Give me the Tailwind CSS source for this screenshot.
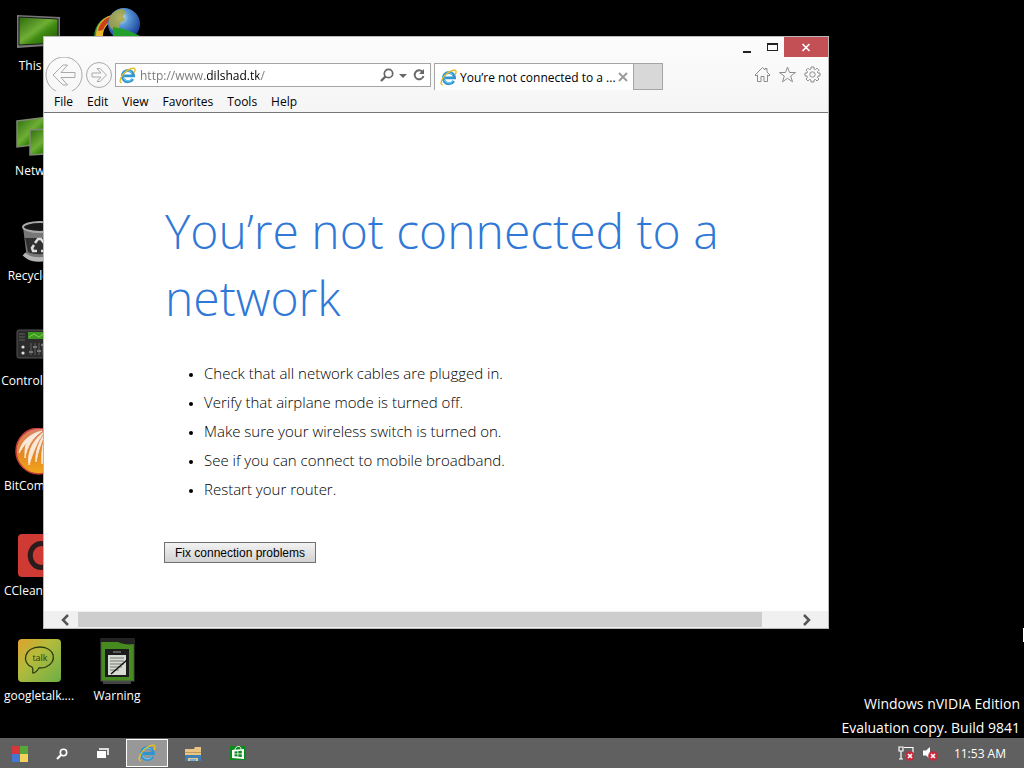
<!DOCTYPE html>
<html lang="en">

<head>
    <meta charset="UTF-8">
    <meta name="viewport" content="width=device-width, initial-scale=1.0">
    <script src="https://cdn.jsdelivr.net/npm/@tailwindcss/browser@4"></script>
    <title>Desktop</title>
</head>

<body class="bg-black text-white min-h-screen flex flex-col overflow-hidden text-xs font-['Open_Sans','Noto_Sans',sans-serif]">
    <!-- shared icons -->
    <svg class="absolute size-0">
        <symbol id="ie" viewBox="0 0 20 20">
            <path d="M16.200 14a6.600 6.600 0 1 1 .9-3.500H6" fill="none" stroke="#2f95d0" stroke-width="3.400" />
            <path d="M15.500 13.800a5.900 5.900 0 0 1-10.500-1M5 8.500a5.900 5.900 0 0 1 10-2" fill="none" stroke="#8bd6f5" stroke-width="1" />
            <path d="M2.500 18.500C-.5 17 3 9 8.500 5 12.500 2 18 .2 18.800 2.500c.3 1-.2 2.600-.8 3.700" fill="none" stroke="#e3bc2a" stroke-width="1.700" stroke-linecap="round" />
        </symbol>
        <symbol id="badge" viewBox="0 0 10 10">
            <circle cx="5" cy="5" r="4.800" fill="#c8283c" />
            <path d="M3 3l4 4M7 3l-4 4" stroke="#fff" stroke-width="1.600" />
        </symbol>
        <linearGradient id="screen" x1="0" y1="0" x2="1" y2="1">
            <stop offset="0" stop-color="#2a6a0c" />
            <stop offset=".45" stop-color="#6fae35" />
            <stop offset=".6" stop-color="#3f8a12" />
            <stop offset="1" stop-color="#1c4f08" />
        </linearGradient>
    </svg>

    <main class="relative flex-1">
        <div class="grid w-fit grid-cols-[78px_78px] auto-rows-[105px] text-center leading-5">
            <div class="flex flex-col pt-2">
                <svg class="mx-auto size-12 shrink-0" viewBox="0 0 48 48">
                    <path d="M2 7l43 2v28L2 40z" fill="#777" />
                    <path d="M4 9l39 2v24L4 37z" fill="url(#screen)" stroke="#1b1b1b" />
                </svg>
                <span>This PC</span>
            </div>
            <div class="flex flex-col pt-2">
                <svg class="mx-auto size-12 shrink-0" viewBox="0 0 48 48">
                    <defs>
                        <radialGradient id="globe" cx=".4" cy=".3" r=".7">
                            <stop offset="0" stop-color="#e8efe0" />
                            <stop offset=".35" stop-color="#5a9ad8" />
                            <stop offset="1" stop-color="#173c94" />
                        </radialGradient>
                    </defs>
                    <path d="M19 7C6 10 0 20 1 34h9C8 24 12 15 20 13z" fill="#2a9a3a" />
                    <path d="M19 7C8 10 3 18 3 28h7c0-7 4-13 11-15z" fill="#e8b52b" />
                    <path d="M19 8c-8 2-13 8-14 15l5-1c2-5 5-8 10-10z" fill="#c9401f" />
                    <circle cx="31" cy="16" r="16" fill="url(#globe)" />
                    <path d="M16 12c2-7 7-11 14-11l3 3-3 4 2 4-5 3-1 6-5 2c-4-3-6-7-5-11z" fill="#a8a43a" fill-opacity=".8" />
                    <path d="M20 19c9 1 18 4 27 9v9H20z" fill="#23a02c" />
                </svg>
            </div>
            <div class="col-start-1 flex flex-col pt-2">
                <svg class="mx-auto size-12 shrink-0" viewBox="0 0 48 48">
                    <path d="M2 8l31-4v26L2 34z" fill="url(#screen)" stroke="#7d8a72" stroke-width="1.500" />
                    <path d="M15 17l31-2v25l-31 2z" fill="url(#screen)" stroke="#7d8a72" stroke-width="1.500" />
                </svg>
                <span>Network</span>
            </div>
            <div class="col-start-1 flex flex-col pt-2">
                <svg class="mx-auto size-12 shrink-0" viewBox="0 0 48 48">
                    <path d="M8 9l4 32c6 4 18 4 24 0l5-32z" fill="#777" />
                    <path d="M10 20l3 14c6 3 17 3 23 0l3-14z" fill="#303030" />
                    <ellipse cx="25" cy="9" rx="17" ry="5" fill="#181818" stroke="#aaa" stroke-width="2" />
                    <path d="M9 36c7 7 23 7 30 0" fill="none" stroke="#b5b5b5" stroke-width="4" />
                    <path d="M20 25l3-4h3l3 4M30 27l2 4-2 2h-4M22 33h-4l-1-3 2-3" fill="none" stroke="#ddd" stroke-width="2.500" />
                </svg>
                <span>Recycle Bin</span>
            </div>
            <div class="col-start-1 flex flex-col pt-2">
                <svg class="mx-auto size-12 shrink-0" viewBox="0 0 48 48">
                    <rect x="2" y="7" width="44" height="28" rx="2" fill="#2c2c2c" stroke="#555" />
                    <path d="M13 9h30v7H13z" fill="#3f9a22" />
                    <path d="M14 14l5-3 5 3 6-4 8 3" fill="none" stroke="#79cf50" />
                    <path d="M4 11h6M4 14h6M4 17h6M16 20v12M20 20v12M24 20v12M28 20v12M32 20v12" stroke="#606060" />
                    <path d="M14 29h4M18 24h4M22 28h4M26 22h4" stroke="#777" stroke-width="2" />
                    <circle cx="8" cy="24" r="1.600" fill="#ddd" />
                    <circle cx="8" cy="30" r="1.600" fill="#ddd" />
                </svg>
                <span>Control Panel</span>
            </div>
            <div class="col-start-1 flex flex-col pt-2">
                <svg class="mx-auto size-12 shrink-0" viewBox="0 0 48 48">
                    <defs>
                        <linearGradient id="comet" x1="0" y1="0" x2="0" y2="1">
                            <stop offset="0" stop-color="#d9806a" />
                            <stop offset=".6" stop-color="#e58a22" />
                            <stop offset="1" stop-color="#f2a81c" />
                        </linearGradient>
                    </defs>
                    <circle cx="24" cy="23" r="23" fill="url(#comet)" stroke="#c23c3c" stroke-width="1.500" />
                    <path d="M4 25C6 14 14 6 27 3c-9 6-15 15-17 27 0-8 0-12 2-16-4 4-6 8-8 11zM14 37c-2-12 3-24 15-33-7 10-11 20-15 33zM21 34c-1-10 3-20 9-29-4 10-7 18-9 29zM27 36c-1-12 1-21 4-29z" fill="#f8e9d8" stroke="#f8e9d8" />
                </svg>
                <span class="pl-1 text-left">BitComet</span>
            </div>
            <div class="col-start-1 flex flex-col pt-2">
                <svg class="mx-auto size-12 shrink-0" viewBox="0 0 48 48">
                    <rect x="3" y="1" width="43" height="43" rx="4" fill="#cf3a35" />
                    <path d="M34 14a11 12 0 1 0 0 17" fill="none" stroke="#2a1c1c" stroke-width="5" />
                </svg>
                <span class="pl-1 text-left">CCleaner</span>
            </div>
            <div class="col-start-1 flex flex-col pt-2">
                <svg class="mx-auto size-12 shrink-0" viewBox="0 0 48 48">
                    <defs>
                        <linearGradient id="talk" x1="0" y1="0" x2="1" y2="1">
                            <stop offset="0" stop-color="#e0a22c" />
                            <stop offset=".4" stop-color="#b4bb3c" />
                            <stop offset="1" stop-color="#6cae45" />
                        </linearGradient>
                    </defs>
                    <rect x="3" y="1" width="43" height="43" rx="4" fill="url(#talk)" />
                    <path d="M17 29C6 25 9 9 25 9c15 0 18 15 6 20-2 1-5 1-7 1-2 3-4 5-6 5-1-1 1-3-1-6z" fill="none" stroke="#2c3a12" stroke-width="1.300" />
                    <text x="25" y="23" text-anchor="middle" font-size="9" fill="#2c3a12">talk</text>
                </svg>
                <span>googletalk....</span>
            </div>
            <div class="flex flex-col pt-2">
                <svg class="mx-auto size-12 shrink-0" viewBox="0 0 48 48">
                    <path d="M10 43h28v3H10z" fill="#444" />
                    <rect x="8" y="1" width="33" height="42" fill="#478a20" stroke="#4a4a4a" />
                    <path d="M8 1h33v5c-6 1-12 0-16-2H8z" fill="#222" />
                    <rect x="12" y="11" width="24" height="28" fill="#1c1c1c" />
                    <rect x="15" y="17" width="18" height="20" fill="#d6dccf" />
                    <path d="M17 20h14M17 23h14M17 26h14M17 29h12M17 32h9" stroke="#777" />
                    <path d="M18 36l16-14" stroke="#111" stroke-width="1.500" />
                    <path d="M20 14h8" stroke="#999" />
                </svg>
                <span>Warning</span>
            </div>
        </div>

        <!-- browser window -->
        <section class="absolute left-[43px] top-9 w-[786px] border border-[#b9b9b9] bg-white text-black">
            <div class="border-b border-[#777] bg-linear-to-b from-[#fcfcfc] to-[#f5f5f5]">
                <div class="flex h-5 justify-end">
                    <button class="grid w-7 place-items-center" aria-label="Minimize">
                        <svg class="h-3 w-3" viewBox="0 0 12 12"><path d="M3 10h8v2H3z" fill="#222" /></svg>
                    </button>
                    <button class="grid w-6 place-items-center" aria-label="Maximize">
                        <svg class="h-3 w-3" viewBox="0 0 12 12"><path d="M1 2h11v8H1zM2 4v5h9V4z" fill="#222" fill-rule="evenodd" /></svg>
                    </button>
                    <button class="grid w-11 place-items-center bg-[#c35055]" aria-label="Close">
                        <svg class="h-3 w-3" viewBox="0 0 12 12"><path d="M2.500 3l7 7M9.500 3l-7 7" stroke="#fff" stroke-width="1.700" /></svg>
                    </button>
                </div>
                <div class="flex h-[34px] items-start">
                    <button class="ml-px" aria-label="Back">
                        <svg class="h-[34px] w-[38px]" viewBox="0 0 38 34" fill="none" stroke="#a9a9a9">
                            <circle cx="19" cy="18" r="18" />
                            <path d="M8 18l10-10h4.500L16 15.500h14v5H16l6.500 7.500H18z" />
                        </svg>
                    </button>
                    <button class="ml-[3px] mt-[5px]" aria-label="Forward">
                        <svg class="size-[26px]" viewBox="0 0 26 26" fill="none" stroke="#a9a9a9">
                            <circle cx="13" cy="13" r="12.500" />
                            <path d="M20.500 13L14 6.500h-3L15 11H6v4h9l-4 4.500h3z" />
                        </svg>
                    </button>
                    <div class="ml-[3px] mt-1.5 flex h-6 w-[316px] items-center border border-[#a5a5a5] bg-white pl-[3px] pr-[3px]">
                        <svg class="size-[17px] shrink-0"><use href="#ie" /></svg>
                        <input type="text" aria-label="Address" value="http://www.dilshad.tk/" class="ml-1 min-w-0 flex-1 bg-[linear-gradient(90deg,#777_65px,#000_65px,#000_119px,#777_119px)] bg-clip-text pt-0.5 text-transparent outline-none">
                        <button aria-label="Search">
                            <svg class="size-4" viewBox="0 0 16 16" fill="none" stroke="#666"><circle cx="9.500" cy="6.500" r="4.200" stroke-width="1.700" /><path d="M6.500 9.500L2 14" stroke-width="2.400" /></svg>
                        </button>
                        <button class="ml-1" aria-label="Search options">
                            <svg class="h-4 w-2" viewBox="0 0 8 16"><path d="M0 7h8l-4 4z" fill="#666" /></svg>
                        </button>
                        <button class="ml-1" aria-label="Refresh">
                            <svg class="size-4" viewBox="0 0 16 16"><path d="M11.500 4.800A4.500 4.500 0 1 0 12.500 9" fill="none" stroke="#666" stroke-width="1.900" /><path d="M13 2v5H8z" fill="#666" /></svg>
                        </button>
                    </div>
                    <div class="ml-[3px] mt-1.5 flex h-[27px] w-[200px] items-center border-x border-t border-[#a5a5a5] bg-white pl-[5px] pr-1">
                        <svg class="size-[17px] shrink-0"><use href="#ie" /></svg>
                        <span class="ml-[3px] flex-1 whitespace-nowrap pt-0.5">You’re not connected to a ...</span>
                        <button aria-label="Close tab">
                            <svg class="size-3" viewBox="0 0 12 12"><path d="M2 2l8 8M10 2l-8 8" stroke="#999" stroke-width="1.800" /></svg>
                        </button>
                    </div>
                    <button class="mt-1.5 h-[27px] w-[29px] border-y border-r border-[#a5a5a5] bg-[#d8d8d8]" aria-label="New tab"></button>
                    <div class="ml-auto mr-[7px] mt-[9px] flex gap-2">
                        <button aria-label="Home">
                            <svg class="size-[17px]" viewBox="0 0 17 17" fill="none" stroke="#8d8d8d"><path d="M1 9l7.500-7.500 2.500 2.500V2.500h2v3.500L16 9l-1 1-1.500-1v6.500h-3.500v-5H7v5H3.500V9L2 10z" /></svg>
                        </button>
                        <button aria-label="Favorites">
                            <svg class="size-[17px]" viewBox="0 0 17 17" fill="none" stroke="#8d8d8d"><path d="M8.500 1l2 5.500h6L11.700 10l1.800 5.800-5-3.500-5 3.500L5.300 10 .5 6.500h6z" /></svg>
                        </button>
                        <button aria-label="Tools">
                            <svg class="size-[17px]" viewBox="0 0 17 17" fill="none" stroke="#8d8d8d"><path d="M7 1h3v2l1.500.6L13 2.200 15 4.200l-1.500 1.500.5 1.300h2v3h-2l-.6 1.500L15 13l-2 2-1.500-1.500L10 14v2H7v-2l-1.500-.6L4 15l-2-2 1.400-1.500L3 10H1V7h2l.5-1.400L2 4.200l2-2 1.500 1.400L7 3z" /><circle cx="8.500" cy="8.500" r="2.700" /></svg>
                        </button>
                    </div>
                </div>
                <nav class="flex h-[21px] items-center gap-3.5 pl-2.5">
                    <button>File</button>
                    <button>Edit</button>
                    <button>View</button>
                    <button>Favorites</button>
                    <button>Tools</button>
                    <button>Help</button>
                </nav>
            </div>

            <div class="pb-12 pl-[121px] pr-[100px] pt-[84px]">
                <h1 class="text-5xl/[67px] font-light text-[#2f78d7]">You’re not connected to a network</h1>
                <ul class="mt-7 list-disc pl-[39px] text-[15px] leading-[29px] font-light marker:text-xs">
                    <li>Check that all network cables are plugged in.</li>
                    <li>Verify that airplane mode is turned off.</li>
                    <li>Make sure your wireless switch is turned on.</li>
                    <li>See if you can connect to mobile broadband.</li>
                    <li>Restart your router.</li>
                </ul>
                <button class="-ml-px mt-[38px] h-[21px] w-[152px] border border-[#707070] bg-linear-to-b from-[#f2f2f2] to-[#d2d2d2] font-['Liberation_Sans',sans-serif]">Fix connection problems</button>
            </div>

            <div class="flex h-[17px] bg-[#f0f0f0]">
                <button class="grid w-[34px] place-items-center pl-2" aria-label="Scroll left">
                    <svg class="size-3" viewBox="0 0 12 12"><path d="M9 1L4 6l5 5" fill="none" stroke="#555" stroke-width="2.500" /></svg>
                </button>
                <div class="my-px flex-1 bg-[#cdcdcd]"></div>
                <button class="grid w-[66px] place-items-center pl-6" aria-label="Scroll right">
                    <svg class="size-3" viewBox="0 0 12 12"><path d="M3 1l5 5-5 5" fill="none" stroke="#555" stroke-width="2.500" /></svg>
                </button>
            </div>
        </section>

        <div class="absolute right-0 top-[628px] h-3.5 w-px bg-white"></div>
        <p class="absolute -bottom-0.5 right-1 text-right text-sm/6">Windows nVIDIA Edition<br>Evaluation copy. Build 9841</p>
    </main>

    <!-- taskbar -->
    <footer class="relative flex h-[30px] items-center bg-[#606060]">
        <button class="grid w-10 place-items-center pt-px" aria-label="Start">
            <svg class="size-4" viewBox="0 0 16 16"><path d="M0 0h8v8H0z" fill="#d9363a" /><path d="M8 0h8v8H8z" fill="#57a639" /><path d="M0 8h8v8H0z" fill="#4377d0" /><path d="M8 8h8v8H8z" fill="#f2d25a" /></svg>
        </button>
        <button class="grid w-11 place-items-center pt-px" aria-label="Search">
            <svg class="size-3" viewBox="0 0 12 12" fill="none" stroke="#fff"><circle cx="7.500" cy="4.500" r="3.200" stroke-width="1.600" /><path d="M5 7l-4 4" stroke-width="2.200" /></svg>
        </button>
        <button class="grid w-[42px] place-items-center pr-1" aria-label="Task view">
            <svg class="size-3" viewBox="0 0 12 12"><path d="M2 1h10v7h-2V3H2z" fill="#ddd" /><path d="M0 4h9v7H0z" fill="#fff" /></svg>
        </button>
        <button class="grid h-7 w-[42px] place-items-center border border-white bg-[#989898]" aria-label="Internet Explorer">
            <svg class="size-[18px]"><use href="#ie" /></svg>
        </button>
        <button class="grid w-[50px] place-items-center pt-px" aria-label="File Explorer">
            <svg class="h-4 w-[18px]" viewBox="0 0 18 16"><path d="M1 3h9l1-2h6v14H1z" fill="#e8c583" /><path d="M1 6h16v1H1z" fill="#c09a5a" /><path d="M1 15V9h16v6h-3v-3H4v3z" fill="#3f7fb5" /><path d="M6 13h6v2H6z" fill="#6fb0dd" /></svg>
        </button>
        <button class="grid w-10 place-items-center" aria-label="Store">
            <svg class="size-4" viewBox="0 0 16 16"><path d="M0 1h16v14H0z" fill="#0b8a1e" /><path d="M2 5l12-1v10L2 13z" fill="#fff" /><path d="M5 5c0-4 6-5 6-1" fill="none" stroke="#fff" /><path d="M4.500 6.500l3-.3v2.300h-3zM8.300 6.100l3.500-.4v2.800H8.300zM4.500 9.300h3v2.300l-3-.3zM8.300 9.300h3.500v2.800l-3.500-.4z" fill="#0b8a1e" /></svg>
        </button>
        <div class="ml-auto mr-[18px] flex items-center gap-2">
            <svg class="size-4" viewBox="0 0 16 16">
                <path d="M6 2.500h9v8H7M3 6v8M1 14h4M1 2h4v4H1z" fill="none" stroke="#fff" stroke-width="1.200" />
                <use href="#badge" x="7" y="6" width="10" height="10" />
            </svg>
            <svg class="size-4" viewBox="0 0 16 16">
                <path d="M1 5.500h3L8 2v12l-4-3.500H1z" fill="#fff" />
                <use href="#badge" x="6" y="6" width="10" height="10" />
            </svg>
            <time class="ml-2 pt-0.5">11:53 AM</time>
        </div>
    </footer>
</body>

</html>
